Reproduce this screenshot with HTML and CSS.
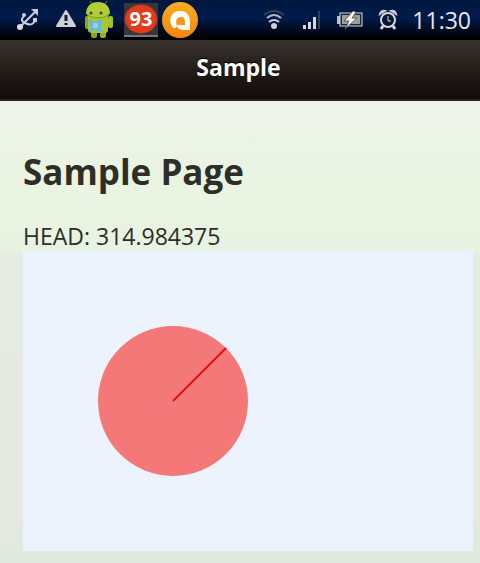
FILE: index.html
```html
<!DOCTYPE html>
<html lang="en">

<head>
    <meta charset="utf-8">
    <meta name="viewport" content="width=device-width, initial-scale=1.0">
    <title>Sample</title>
    <link rel="stylesheet" href="styles.css">
</head>

<body>
    <div class="statusbar">
        <div class="notifications">
            <svg class="usb" width="24" height="24" viewBox="0 0 24 24" fill="none" stroke="#c9ced6" stroke-width="2">
                <path d="M4 19L20 3M9 14C5 14 5 11 8 8M9 15C15 18 18 16 19 12" />
                <path d="M15 1h7v7z" fill="#c9ced6" stroke="none" />
                <circle cx="4" cy="19" r="3" fill="#d8dde4" stroke="none" />
                <circle cx="8" cy="7" r="2" fill="#c9ced6" stroke="none" />
                <path d="M17 10h4v4h-4z" fill="#c9ced6" stroke="none" />
            </svg>
            <svg class="warning" width="24" height="24" viewBox="0 0 24 24">
                <path d="M12 3L21 18H3z" fill="#cdd1d6" stroke="#cdd1d6" stroke-width="2" stroke-linejoin="round" />
                <path d="M12 7v6M12 15v2" stroke="#141b2b" stroke-width="3" />
            </svg>
            <svg class="android" width="30" height="38" viewBox="0 0 30 38">
                <path d="M9 4L6 0M20 4L23 0" stroke="#7d9c1d" stroke-width="1" />
                <rect x="7" y="28" width="6" height="9" rx="2" fill="#86a81b" />
                <rect x="16" y="28" width="6" height="9" rx="2" fill="#93b420" />
                <rect x="1" y="15" width="5" height="13" rx="2" fill="#86a81b" />
                <rect x="24" y="15" width="5" height="12" rx="2" fill="#a4c22a" />
                <path d="M4 14h20v15q0 3-3 3H8q-4 0-4-3z" fill="#a8c72e" />
                <path d="M2 13C2 5 7 1 14 1S26 5 26 13Q14 19 2 13z" fill="#b2cf37" />
                <path d="M3 14Q14 20 25 14" fill="none" stroke="#7f9d1c" stroke-width="1" />
                <circle cx="7" cy="12" r="1.5" fill="#3a4710" />
                <circle cx="17" cy="12" r="1.5" fill="#3a4710" />
                <path d="M4 20Q8 18 11 22Q15 18 19 19L16 25L19 31Q14 31 11 28Q8 31 5 31L7 26z" fill="#62b5ee" />
                <path d="M9 22h5v5h-5z" fill="#8fd0f6" />
            </svg>
            <span class="badge">93</span>
            <svg class="avast" width="36" height="36" viewBox="0 0 36 36">
                <defs>
                    <linearGradient id="orange" x1="0" y1="0" x2="0" y2="1">
                        <stop offset="0" stop-color="#fbad22" />
                        <stop offset="1" stop-color="#f4850f" />
                    </linearGradient>
                </defs>
                <circle cx="18" cy="18" r="18" fill="url(#orange)" />
                <path d="M12 26C6 22 7 9 18 9C25 9 28 14 28 19V28H23C18 28 15 26 15 24Q13 27 12 26z" fill="#fff" />
                <path d="M15 24C13 18 15 15 19 15C22 15 23 17 23 20V23H19Q16 22 15 24z" fill="#f7951a" />
            </svg>
        </div>
        <div class="system">
            <svg class="wifi" width="24" height="24" viewBox="0 0 24 24" fill="none" stroke-width="2">
                <path d="M2 7Q12 -1 22 7" stroke="#334056" />
                <path d="M5 10Q12 4 19 10" stroke="#b4bac5" />
                <path d="M7 14Q12 10 17 14" stroke="#c9ced6" />
                <circle cx="12" cy="18" r="3" fill="#cdd1d6" />
            </svg>
            <svg class="signal" width="20" height="20" viewBox="0 0 20 20">
                <path d="M1 15h3v4h-3zM6 12h3v7h-3zM11 7h3v12h-3z" fill="#d5d9df" />
                <path d="M16 1h2v18h-2z" fill="#334056" />
            </svg>
            <svg class="battery" width="28" height="20" viewBox="0 0 28 20">
                <path d="M1 6h3v8h-3z" fill="#b8bdc5" />
                <rect x="4" y="3" width="22" height="13" fill="#20252c" stroke="#d5d9df" stroke-width="1" />
                <rect x="6" y="5" width="18" height="9" fill="#9a9fa2" />
                <path d="M17 1L8 11H13L9 19L21 8H16L20 2z" fill="#fffdf0" stroke="#55595c" stroke-width="1" />
            </svg>
            <svg class="alarm" width="20" height="24" viewBox="0 0 20 24">
                <path d="M2 6Q3 2 7 3zM18 6Q17 2 13 3z" fill="#c4c9d1" stroke="#c4c9d1" stroke-width="2" />
                <path d="M5 18L3 21M15 18L17 21" stroke="#d5d9df" stroke-width="3" />
                <circle cx="10" cy="12" r="7" fill="#0b1730" stroke="#d5d9df" stroke-width="2" />
                <path d="M10 8v5h3" fill="none" stroke="#d5d9df" stroke-width="1" />
            </svg>
            <time class="clock">11:30</time>
        </div>
    </div>

    <header class="toolbar">
        <div class="title">Sample</div>
    </header>

    <main class="content">
        <h1>Sample Page</h1>
        <div class="heading">HEAD: 314.984375</div>
        <svg class="compass" viewBox="0 0 450 300">
            <circle cx="150" cy="150" r="75" fill="#f47878" />
            <path d="M150 150L203 97" stroke="#e60f14" stroke-width="2" />
        </svg>
    </main>
</body>

</html>
```

FILE: styles.css
```css
* {
    margin: 0;
    padding: 0;
    box-sizing: border-box;
}

body {
    min-height: 100vh;
    font-family: "Open Sans", "Noto Sans", sans-serif;
    font-size: 23px;
    color: #2e2e26;
    display: flex;
    flex-direction: column;
}

/* Status bar */
.statusbar {
    height: 40px;
    display: flex;
    justify-content: space-between;
    background: linear-gradient(to bottom, #00183f 0%, #001b4b 45%, #000a20 75%, #000000 95%);
}

.notifications,
.system {
    display: flex;
    align-items: center;
}

.notifications {
    gap: 6px;
    padding-left: 16px;
}

.usb {
    margin-right: 8px;
}

.android {
    margin-right: 4px;
}

.avast {
    margin-left: -2px;
}

.badge {
    width: 34px;
    height: 34px;
    line-height: 32px;
    text-align: center;
    font-size: 20px;
    font-weight: bold;
    color: #ffffff;
    background: radial-gradient(ellipse 17px 15px at 50% 50%, #e23a1b 90%, #3a3638 100%);
    border-bottom: 2px solid #77797e;
}

.system {
    padding-right: 9px;
}

.wifi,
.signal,
.battery,
.alarm {
    margin-right: 14px;
}

.wifi {
    margin-right: 16px;
}

.clock {
    color: #e6e9ee;
}

/* Toolbar */
.toolbar {
    height: 61px;
    display: flex;
    justify-content: center;
    align-items: center;
    padding-right: 3px;
    padding-bottom: 6px;
    border-bottom: 2px solid #29221c;
    background: linear-gradient(to bottom, #38332e 0%, #1e1915 60%, #110c09 100%);
}

.title {
    font-weight: bold;
    color: #ffffff;
    text-shadow: 0 -1px 1px #000000;
}

/* Page, the dotted pattern shows through between the two gradients */
.content {
    flex: 1;
    padding: 48px 7px 12px 23px;
    background:
        linear-gradient(to bottom, #eef3ea 0, #eaf4e3 70px, #e7f3e2 152px, transparent 152px, transparent 255px, #e5e9e0 255px, #e5e9e0 420px, #e0eade 462px),
        repeating-conic-gradient(#dfe5da 0 25%, #ecf2e8 0 50%) 0 0 / 2px 2px;
}

h1 {
    font-size: 35px;
    line-height: 46px;
    margin-bottom: 26px;
}

.heading {
    line-height: 30px;
}

.compass {
    display: block;
    width: 100%;
    background: #edf3fc;
}
```
